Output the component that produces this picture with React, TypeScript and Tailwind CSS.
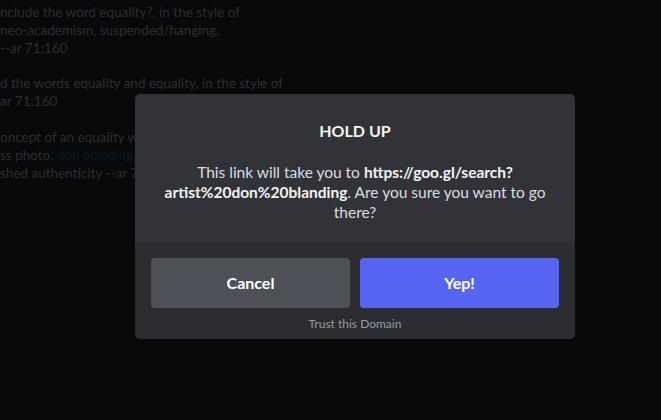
import React from "react";

export default function App() {
  const font = { fontFamily: 'Lato, "Noto Sans", sans-serif' };
  return (
    <div className="relative w-[661px] h-[420px] overflow-hidden bg-[#08090b]" style={font}>
      <div className="text-[13.5px] leading-[18px] text-[#2c2e32] pt-[3px] whitespace-nowrap">
        <div>nclude the word equality?, in the style of</div>
        <div>neo-academism, suspended/hanging,</div>
        <div>--ar 71:160</div>
        <div className="h-[17px]" />
        <div>d the words equality and equality, in the style of</div>
        <div>ar 71:160</div>
        <div className="h-[18px]" />
        <div>oncept of an equality with humanity in it</div>
        <div>
          ss photo, <span className="text-[#051c2a]">don blanding</span>, cinematic portrait
        </div>
        <div>shed authenticity --ar 71:160</div>
      </div>

      <div className="absolute left-[135px] top-[94px] w-[440px] rounded-[5px] overflow-hidden bg-[#313338]">
        <div className="pt-[27px] pb-[20px] px-4 text-center">
          <div className="text-[16px] leading-5 font-bold text-[#f2f3f5]">HOLD UP</div>
          <div className="mt-[21px] text-[15.5px] leading-5 text-[#dbdee1]">
            This link will take you to{" "}
            <span className="font-bold text-[#f2f3f5]">
              https://goo.gl/search?<wbr />artist%20don%20blanding
            </span>
            . Are you sure you want to go there?
          </div>
        </div>
        <div className="bg-[#2b2d31] px-4 pt-4 pb-[7px]">
          <div className="flex gap-[10px]">
            <button className="flex-1 h-[50px] rounded-[4px] bg-[#4e5058] text-white text-[16px] font-bold">
              Cancel
            </button>
            <button className="flex-1 h-[50px] rounded-[4px] bg-[#5865f2] text-white text-[16px] font-bold">
              Yep!
            </button>
          </div>
          <div className="mt-[8px] text-center text-[12px] leading-4 text-[#949ba4]">Trust this Domain</div>
        </div>
      </div>
    </div>
  );
}
